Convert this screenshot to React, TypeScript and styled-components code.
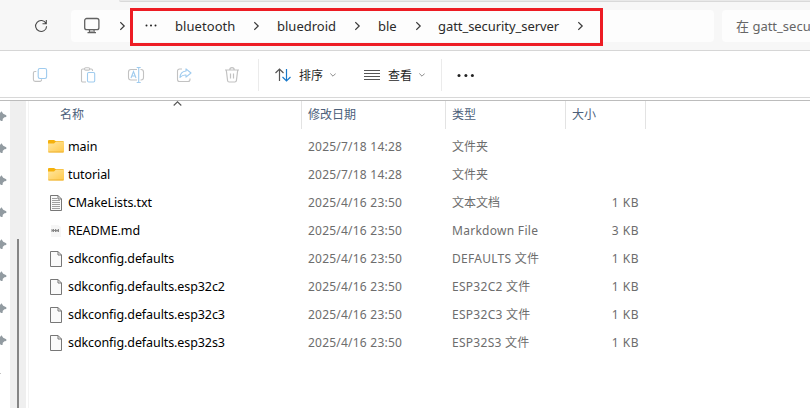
import React from "react";
import styled, { createGlobalStyle } from "styled-components";

const GlobalStyle = createGlobalStyle`
  * { box-sizing: border-box; }
  html, body { margin: 0; background: #fff; overflow: hidden; }
  body { font-family: "Noto Sans", "Noto Sans CJK SC", sans-serif; font-size: 12px; }
  svg { display: block; flex: none; }
`;

const Window = styled.div`
  width: 810px;
  height: 408px;
  display: flex;
  flex-direction: column;
  overflow: hidden;
  background: #fff;
`;

const TabStrip = styled.div`
  height: 2px;
  flex: none;
  margin-left: 119px;
  background: #e9e9e9;
  border-bottom: 1px solid #d9d9d9;
  border-bottom-left-radius: 2px;
`;

const AddressRow = styled.div`
  height: 51px;
  flex: none;
  display: flex;
  flex-direction: column;
  background: #f7f7f7;
  border-bottom: 1px solid #d6d6d6;
`;

const AddressContent = styled.div`
  display: flex;
  padding-top: 8px;
`;

const RefreshButton = styled.div`
  width: 71px;
  height: 32px;
  flex: none;
  padding: 8px 0 0 33px;
`;

const AddressBar = styled.div`
  width: 643px;
  height: 32px;
  flex: none;
  margin-right: 8px;
  display: flex;
  align-items: center;
  background: #fdfdfd;
  border-radius: 4px;
`;

const MonitorSlot = styled.div`
  width: 49px;
  padding-left: 12px;
`;

const Highlight = styled.div`
  width: 473px;
  height: 38px;
  flex: none;
  margin: 2px 0 0 5px;
  display: flex;
  align-items: center;
  border: 3px solid #ed1c24;
  padding: 0 0 2px 12px;
`;

const Crumb = styled.div<{ $width: number; $tracking: number }>`
  width: ${(p) => p.$width}px;
  flex: none;
  font-size: 13px;
  line-height: 20px;
  letter-spacing: ${(p) => p.$tracking}px;
  white-space: nowrap;
  color: #2b2b2b;
`;

const ChevronSlot = styled.div<{ $width: number }>`
  width: ${(p) => p.$width}px;
  flex: none;
`;

const SearchBox = styled.div`
  width: 110px;
  height: 32px;
  flex: none;
  padding-left: 14px;
  background: #fdfdfd;
  border-radius: 4px;
  font-size: 13px;
  line-height: 33px;
  white-space: nowrap;
  color: #666;
`;

const Toolbar = styled.div`
  height: 47px;
  flex: none;
  display: flex;
  align-items: flex-start;
  padding: 8px 0 0 30px;
  border-bottom: 1px solid #d8d8d8;
`;

const ToolButton = styled.div`
  width: 20px;
  height: 32px;
  margin-right: 28px;
  flex: none;
  display: flex;
  align-items: center;
  justify-content: center;
`;

const ToolDivider = styled.div<{ $before?: number }>`
  width: 1px;
  height: 32px;
  margin-left: ${(p) => p.$before ?? 0}px;
  background: #ebebeb;
`;

const MenuButton = styled.div<{ $before: number }>`
  height: 32px;
  margin-left: ${(p) => p.$before}px;
  display: flex;
  align-items: center;
`;

const MenuLabel = styled.span`
  width: 24px;
  margin: 0 7px 0 8px;
  padding-top: 1px;
  line-height: 32px;
  color: #1f1f1f;
  white-space: nowrap;
`;

const Body = styled.div`
  flex: 1;
  min-height: 0;
  display: flex;
  margin-top: 2px;
  border-top: 1px solid #bcbcbc;
`;

const Sidebar = styled.div`
  width: 10px;
  flex: none;
  overflow: hidden;
  padding-top: 8px;
`;

const PinSlot = styled.div`
  height: 32px;
`;

const SidebarMark = styled.div`
  width: 1px;
  height: 1px;
  margin-top: 8px;
  background: #c4c4c4;
`;

const ScrollTrack = styled.div`
  width: 16px;
  flex: none;
  padding: 138px 0 0 7px;
  background: #efefef;
`;

const ScrollThumb = styled.div`
  width: 2px;
  height: 170px;
  background: #858585;
`;

const FileList = styled.div`
  flex: 1;
  margin-left: 2px;
  border-left: 1px solid #f3f3f3;
`;

const HeaderRow = styled.div`
  display: grid;
  grid-template-columns: 273px 144px 120px 80px;
  height: 27px;
  margin-bottom: 5px;
`;

const HeaderCell = styled.div<{ $indent?: number }>`
  position: relative;
  padding-left: ${(p) => p.$indent ?? 6}px;
  border-right: 1px solid #e3e3e3;
  line-height: 28px;
  color: #4c607a;
`;

const SortMark = styled.div`
  position: absolute;
  left: 144px;
  top: 0;
`;

const FileRow = styled.div`
  display: grid;
  grid-template-columns: 272px 144px 120px 80px;
  height: 28px;
  line-height: 28px;
  margin-left: 1px;
  white-space: nowrap;
  color: #6d6d6d;
`;

const NameCell = styled.div`
  display: flex;
  align-items: center;
  padding-left: 18px;
  color: #000;
`;

const FileName = styled.span`
  margin-left: 4px;
  font-size: 12.5px;
  letter-spacing: -0.09px;
`;

const DateCell = styled.div`
  padding-left: 6px;
  letter-spacing: 0.22px;
`;

const TypeCell = styled.div<{ $latin: boolean }>`
  padding-left: 6px;
  letter-spacing: ${(p) => (p.$latin ? 0.28 : 0)}px;
`;

const SizeCell = styled.div`
  padding-right: 7px;
  text-align: right;
  letter-spacing: 0.5px;
`;

const Chevron = () => (
  <svg width="6" height="10" viewBox="0 0 6 10" fill="none" stroke="#3a3a3a" strokeWidth="1.2">
    <path d="M.3 1.200 4.200 5 .3 8.800" />
  </svg>
);

const DownChevron = () => (
  <svg width="6" height="4" viewBox="0 0 6 4" fill="none" stroke="#8c8c8c" strokeWidth="1">
    <path d="M.3.5 3 3.2 5.7.5" />
  </svg>
);

const Refresh = () => (
  <svg width="16" height="16" viewBox="0 0 16 16" fill="none" stroke="#4a4a4a" strokeWidth="1.1">
    <path d="M13 5.500A5.500 5.500 0 1 0 13.600 8.200M13.300 2V5.800H9.500" />
  </svg>
);

const Monitor = () => (
  <svg width="18" height="18" viewBox="0 0 18 18" fill="none" stroke="#626262" strokeWidth="1.3">
    <rect x="1.7" y="1.5" width="14.2" height="11.2" rx="2" />
    <path d="M6.5 13V15.500M11 13V15.500M4.5 15.700H13" />
    <path d="M7 14.3H10.6" stroke="#aaa" />
  </svg>
);

const Dots = ({ wide = false }: { wide?: boolean }) =>
  wide ? (
    <svg width="18" height="4" viewBox="0 0 18 4" fill="#222">
      <circle cx="2" cy="2.4" r="1.5" />
      <circle cx="8.9" cy="2.4" r="1.5" />
      <circle cx="15.400" cy="2.4" r="1.5" />
    </svg>
  ) : (
    <svg width="12" height="5" viewBox="0 0 12 5" fill="#222">
      <circle cx="1.5" cy="1.5" r="1" />
      <circle cx="6" cy="1.5" r="1" />
      <circle cx="10.500" cy="1.5" r="1" />
    </svg>
  );

const GREY = "#c2c2c2";
const BLUE = "#9fcbee";

const CopyIcon = () => (
  <svg width="16" height="16" viewBox="0 0 16 16" fill="none" strokeWidth="1.1">
    <path d="M4.300 4.500H3a1.600 1.600 0 0 0-1.600 1.600v6.500A1.800 1.800 0 0 0 3.200 14.400H8a1.500 1.500 0 0 0 1.500-1.500v-.7" stroke={GREY} />
    <rect x="6.200" y="1.500" width="8.400" height="10" rx="1.700" stroke={BLUE} />
  </svg>
);

const PasteIcon = () => (
  <svg width="16" height="16" viewBox="0 0 16 16" fill="none" strokeWidth="1.1">
    <path d="M4.500 2H2.700A1.200 1.200 0 0 0 1.500 3.200v10.600A1.200 1.200 0 0 0 2.700 15H6M9.500 2h1.800a1.200 1.200 0 0 1 1.200 1.200V4" stroke={GREY} />
    <rect x="4.500" y=".7" width="5.200" height="2.400" rx="1.200" stroke={GREY} />
    <rect x="7.500" y="5.500" width="7.200" height="9.500" rx="1.200" stroke={BLUE} />
  </svg>
);

const RenameIcon = () => (
  <svg width="18" height="18" viewBox="0 0 18 18" fill="none" strokeWidth="1.1">
    <path d="M10 3.500H4A2.500 2.500 0 0 0 1.500 6v5.500A2.500 2.500 0 0 0 4 14h6M13.500 3.500h.5A2.500 2.500 0 0 1 16.500 6v5.500A2.500 2.500 0 0 1 14 14h-.5" stroke={GREY} />
    <path d="M4 12 6.500 5.500 9 12M4.900 10H8.100M9.700 1.500h4M9.700 16.500h4M11.700 1.500v15" stroke={BLUE} />
  </svg>
);

const ShareIcon = () => (
  <svg width="16" height="16" viewBox="0 0 16 16" fill="none" strokeWidth="1.1" strokeLinejoin="round">
    <path d="M6 2H3.500a2 2 0 0 0-2 2v8.500a2 2 0 0 0 2 2h8.500a2 2 0 0 0 2-2V11.500" stroke={GREY} />
    <path d="M10 1.800 15 6 10 10.200V8C7.500 7.800 5.500 8.700 4 10.500 4.200 6.800 6.500 4.300 10 4Z" stroke={BLUE} />
  </svg>
);

const TrashIcon = () => (
  <svg width="16" height="16" viewBox="0 0 16 16" fill="none" stroke={GREY} strokeWidth="1.2">
    <path d="M1 3H15M5.800 2.800a2.200 2.200 0 0 1 4.400 0M2.300 3.200 3.600 13.700A1.500 1.500 0 0 0 5.100 15h5.800a1.500 1.500 0 0 0 1.500-1.300L13.700 3.200M6.500 6.500v5M9.500 6.500v5" />
  </svg>
);

const SortIcon = () => (
  <svg width="16" height="16" viewBox="0 0 16 16" fill="none" strokeWidth="1.200">
    <path d="M4.500 14V2M.5 6 4.500 2 8.500 6" stroke="#555" />
    <path d="M11.500 2V14M7.500 10 11.500 14 15.500 10" stroke="#1979ca" />
  </svg>
);

const ViewIcon = () => (
  <svg width="16" height="12" viewBox="0 0 16 12" stroke="#555" strokeWidth="1" shapeRendering="crispEdges">
    <path d="M0 1.500H16M0 4.500H16M0 7.500H16M0 10.500H16" />
  </svg>
);

const Pin = () => (
  <svg width="7" height="16" viewBox="0 0 7 16" fill="#929ba1">
    <path d="M0 4 1.500 2.300 3.200 4.800 6.300 6.200V8L4.500 8.300 2.800 9.800 2.500 12H1L0 11Z" />
  </svg>
);

const SortArrow = () => (
  <svg width="10" height="6" viewBox="0 0 10 6" fill="none" stroke="#555" strokeWidth="1.100">
    <path d="M.7 4.500 4.500 .8 8.300 4.500" />
  </svg>
);

const FolderIcon = () => (
  <svg width="16" height="16" viewBox="0 0 16 16">
    <defs>
      <linearGradient id="folder" x1="0" y1="0" x2="1" y2="1">
        <stop offset="0" stopColor="#ffe6a0" />
        <stop offset="1" stopColor="#ffc94a" />
      </linearGradient>
    </defs>
    <path d="M0 2Q0 1 1 1H6L8 2.300H15Q16 2.300 16 3.300V7H0Z" fill="#f5b10c" />
    <path d="M0 4.500H6L7.500 3H16V12.500Q16 13.500 15 13.500H1Q0 13.500 0 12.500Z" fill="url(#folder)" />
    <path d="M.5 13H15.500" stroke="#e9aa25" strokeWidth=".8" />
  </svg>
);

const DocumentIcon = ({ lines = false }: { lines?: boolean }) => (
  <svg width="16" height="18" viewBox="0 0 16 18" fill="none">
    <path d="M2.500 1.500H10L13.500 5V16.500H2.500Z" fill="#fafafa" stroke="#777" />
    <path d="M10 1.500V5H13.500" stroke="#777" />
    {lines && <path d="M4 4.500H9M4 6.500H12M4 8.500H12M4 10.500H12M4 12.500H12M4 14.500H12" stroke="#a0a0a0" />}
  </svg>
);

const MarkdownIcon = () => (
  <svg width="16" height="16" viewBox="0 0 16 16" fill="none">
    <path d="M3 2H10L13 4V14H3Z" fill="#f6f6f6" />
    <path d="M4 6V9M5.500 6V9M7.500 6V9M9 6.500V9M10.500 6V9" stroke="#888" />
    <path d="M4 7.500H11" stroke="#888" />
  </svg>
);

type Kind = "folder" | "text" | "markdown" | "file";

const FileIcon = ({ kind }: { kind: Kind }) => {
  if (kind === "folder") return <FolderIcon />;
  if (kind === "markdown") return <MarkdownIcon />;
  return <DocumentIcon lines={kind === "text"} />;
};

const files: { name: string; kind: Kind; date: string; type: string; size?: string }[] = [
  { name: "main", kind: "folder", date: "2025/7/18 14:28", type: "文件夹" },
  { name: "tutorial", kind: "folder", date: "2025/7/18 14:28", type: "文件夹" },
  { name: "CMakeLists.txt", kind: "text", date: "2025/4/16 23:50", type: "文本文档", size: "1 KB" },
  { name: "README.md", kind: "markdown", date: "2025/4/16 23:50", type: "Markdown File", size: "3 KB" },
  { name: "sdkconfig.defaults", kind: "file", date: "2025/4/16 23:50", type: "DEFAULTS 文件", size: "1 KB" },
  { name: "sdkconfig.defaults.esp32c2", kind: "file", date: "2025/4/16 23:50", type: "ESP32C2 文件", size: "1 KB" },
  { name: "sdkconfig.defaults.esp32c3", kind: "file", date: "2025/4/16 23:50", type: "ESP32C3 文件", size: "1 KB" },
  { name: "sdkconfig.defaults.esp32s3", kind: "file", date: "2025/4/16 23:50", type: "ESP32S3 文件", size: "1 KB" },
];

const crumbs = [
  { label: "bluetooth", width: 79, gap: 23, tracking: 0.06 },
  { label: "bluedroid", width: 78, gap: 23, tracking: 0 },
  { label: "ble", width: 38, gap: 22, tracking: 0 },
  { label: "gatt_security_server", width: 140, gap: 6, tracking: -0.06 },
];

const tools = [CopyIcon, PasteIcon, RenameIcon, ShareIcon, TrashIcon];

export default function App() {
  return (
    <Window>
      <GlobalStyle />
      <AddressRow>
        <TabStrip />
        <AddressContent>
          <RefreshButton><Refresh /></RefreshButton>
          <AddressBar>
            <MonitorSlot><Monitor /></MonitorSlot>
            <ChevronSlot $width={5}><Chevron /></ChevronSlot>
            <Highlight>
              <ChevronSlot $width={30}><Dots /></ChevronSlot>
              {crumbs.map((c) => (
                <React.Fragment key={c.label}>
                  <Crumb $width={c.width} $tracking={c.tracking}>{c.label}</Crumb>
                  <ChevronSlot $width={c.gap}><Chevron /></ChevronSlot>
                </React.Fragment>
              ))}
            </Highlight>
          </AddressBar>
          <SearchBox>在 gatt_secu</SearchBox>
        </AddressContent>
      </AddressRow>
      <Toolbar>
        {tools.map((Tool, i) => (
          <ToolButton key={i}><Tool /></ToolButton>
        ))}
        <ToolDivider $before={-12} />
        <MenuButton $before={16}>
          <SortIcon />
          <MenuLabel>排序</MenuLabel>
          <DownChevron />
        </MenuButton>
        <MenuButton $before={28}>
          <ViewIcon />
          <MenuLabel>查看</MenuLabel>
          <DownChevron />
        </MenuButton>
        <ToolDivider $before={16} />
        <MenuButton $before={15}><Dots wide /></MenuButton>
      </Toolbar>
      <Body>
        <Sidebar>
          {Array.from({ length: 8 }, (_, i) => (
            <PinSlot key={i}><Pin /></PinSlot>
          ))}
          <SidebarMark />
        </Sidebar>
        <ScrollTrack><ScrollThumb /></ScrollTrack>
        <FileList>
          <HeaderRow>
            <HeaderCell $indent={31}>
              名称
              <SortMark><SortArrow /></SortMark>
            </HeaderCell>
            <HeaderCell>修改日期</HeaderCell>
            <HeaderCell>类型</HeaderCell>
            <HeaderCell>大小</HeaderCell>
          </HeaderRow>
          {files.map((f) => (
            <FileRow key={f.name}>
              <NameCell>
                <FileIcon kind={f.kind} />
                <FileName>{f.name}</FileName>
              </NameCell>
              <DateCell>{f.date}</DateCell>
              <TypeCell $latin={/[A-Z]/.test(f.type)}>{f.type}</TypeCell>
              <SizeCell>{f.size}</SizeCell>
            </FileRow>
          ))}
        </FileList>
      </Body>
    </Window>
  );
}
